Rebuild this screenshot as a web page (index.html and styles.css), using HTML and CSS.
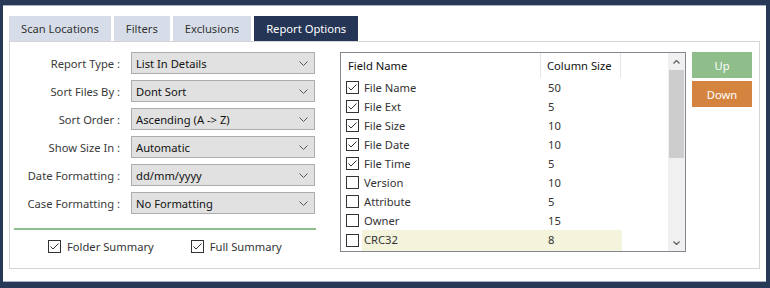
FILE: index.html
```html
<!DOCTYPE html>
<html lang="en">
<head>
    <meta charset="UTF-8">
    <title>Report Options</title>
    <link rel="stylesheet" href="styles.css">
</head>
<body>
    <div class="window">
        <div class="tabs">
            <div class="tab">Scan Locations</div>
            <div class="tab">Filters</div>
            <div class="tab">Exclusions</div>
            <div class="tab active">Report Options</div>
        </div>

        <div class="panel">
            <div class="options">
                <div class="form-grid">
                    <label>Report Type :</label>
                    <div class="select">List In Details<svg viewBox="0 0 9 5"><polyline points="0.5,0.5 4.5,4.5 8.5,0.5"/></svg></div>
                    <label>Sort Files By :</label>
                    <div class="select">Dont Sort<svg viewBox="0 0 9 5"><polyline points="0.5,0.5 4.5,4.5 8.5,0.5"/></svg></div>
                    <label>Sort Order :</label>
                    <div class="select">Ascending (A -&gt; Z)<svg viewBox="0 0 9 5"><polyline points="0.5,0.5 4.5,4.5 8.5,0.5"/></svg></div>
                    <label>Show Size In :</label>
                    <div class="select">Automatic<svg viewBox="0 0 9 5"><polyline points="0.5,0.5 4.5,4.5 8.5,0.5"/></svg></div>
                    <label>Date Formatting :</label>
                    <div class="select">dd/mm/yyyy<svg viewBox="0 0 9 5"><polyline points="0.5,0.5 4.5,4.5 8.5,0.5"/></svg></div>
                    <label>Case Formatting :</label>
                    <div class="select">No Formatting<svg viewBox="0 0 9 5"><polyline points="0.5,0.5 4.5,4.5 8.5,0.5"/></svg></div>
                </div>
                <div class="divider"></div>
                <div class="summary">
                    <div class="check-item"><span class="box checked"><svg viewBox="0 0 11 11"><polyline points="1.5,5.5 4,8 9.5,2.5"/></svg></span>Folder Summary</div>
                    <div class="check-item"><span class="box checked"><svg viewBox="0 0 11 11"><polyline points="1.5,5.5 4,8 9.5,2.5"/></svg></span>Full Summary</div>
                </div>
            </div>

            <div class="field-list">
                <div class="list-body">
                    <div class="list-head">
                        <div class="head-name">Field Name</div>
                        <div class="head-size">Column Size</div>
                    </div>
                    <div class="row"><span class="box checked"><svg viewBox="0 0 11 11"><polyline points="1.5,5.5 4,8 9.5,2.5"/></svg></span><span class="cell-name">File Name</span><span class="cell-size">50</span></div>
                    <div class="row"><span class="box checked"><svg viewBox="0 0 11 11"><polyline points="1.5,5.5 4,8 9.5,2.5"/></svg></span><span class="cell-name">File Ext</span><span class="cell-size">5</span></div>
                    <div class="row"><span class="box checked"><svg viewBox="0 0 11 11"><polyline points="1.5,5.5 4,8 9.5,2.5"/></svg></span><span class="cell-name">File Size</span><span class="cell-size">10</span></div>
                    <div class="row"><span class="box checked"><svg viewBox="0 0 11 11"><polyline points="1.5,5.5 4,8 9.5,2.5"/></svg></span><span class="cell-name">File Date</span><span class="cell-size">10</span></div>
                    <div class="row"><span class="box checked"><svg viewBox="0 0 11 11"><polyline points="1.5,5.5 4,8 9.5,2.5"/></svg></span><span class="cell-name">File Time</span><span class="cell-size">5</span></div>
                    <div class="row"><span class="box"></span><span class="cell-name">Version</span><span class="cell-size">10</span></div>
                    <div class="row"><span class="box"></span><span class="cell-name">Attribute</span><span class="cell-size">5</span></div>
                    <div class="row"><span class="box"></span><span class="cell-name">Owner</span><span class="cell-size">15</span></div>
                    <div class="row selected"><span class="box"></span><span class="cell-name">CRC32</span><span class="cell-size">8</span></div>
                </div>
                <div class="scrollbar">
                    <div class="arrow"><svg viewBox="0 0 7 4"><polyline points="0.5,3.5 3.5,0.5 6.5,3.5"/></svg></div>
                    <div class="track"><div class="thumb"></div></div>
                    <div class="arrow"><svg viewBox="0 0 7 4"><polyline points="0.5,0.5 3.5,3.5 6.5,0.5"/></svg></div>
                </div>
            </div>

            <div class="buttons">
                <div class="btn btn-up">Up</div>
                <div class="btn btn-down">Down</div>
            </div>
        </div>
    </div>
</body>
</html>
```

FILE: styles.css
```css
body {
    margin: 0;
    padding: 5px 4px 6px 3px;
    height: 288px;
    box-sizing: border-box;
    background: #283857;
    font-family: "Noto Sans", "Open Sans", sans-serif;
    font-size: 11.2px;
    color: #333;
}
.window {
    height: 100%;
    box-sizing: border-box;
    background: #fff;
    border-top: 1px solid #aab3c3;
    border-bottom: 1px solid #aab3c3;
    padding: 10px 6px 12px 6px;
    display: flex;
    flex-direction: column;
}
.tabs {
    display: flex;
    gap: 3px;
    height: 25px;
}
.tab {
    display: flex;
    align-items: center;
    padding: 0 12px;
    background: #d7dde8;
    color: #333;
}
.tab.active {
    background: #253556;
    color: #fff;
}
.panel {
    flex: 1;
    border: 1px solid #d4d4d4;
    display: flex;
    align-items: flex-start;
    padding: 10px 7px 0 4px;
}
.options {
    width: 302px;
}
.form-grid {
    display: grid;
    grid-template-columns: 106px 184px;
    column-gap: 11px;
    row-gap: 6px;
}
.form-grid label {
    display: flex;
    align-items: center;
    justify-content: flex-end;
    color: #3a3a3a;
}
.select {
    height: 22px;
    box-sizing: border-box;
    border: 1px solid #adadad;
    background: #e1e1e1;
    color: #111;
    display: flex;
    align-items: center;
    justify-content: space-between;
    padding: 0 6px 0 4px;
}
.select svg {
    width: 9px;
    height: 5px;
    fill: none;
    stroke: #555;
    stroke-width: 1;
}
.divider {
    margin-top: 14px;
    height: 2px;
    background: #8fbd8b;
}
.summary {
    margin-top: 6px;
    height: 20px;
    display: flex;
    align-items: center;
    gap: 37px;
    padding-left: 34px;
}
.check-item {
    display: flex;
    align-items: center;
    gap: 6px;
}
.box {
    width: 13px;
    height: 13px;
    box-sizing: border-box;
    border: 1px solid #333;
    background: #fff;
    display: flex;
    align-items: center;
    justify-content: center;
    flex-shrink: 0;
}
.box svg {
    width: 11px;
    height: 11px;
    fill: none;
    stroke: #333;
    stroke-width: 1;
}
.field-list {
    margin-left: 24px;
    width: 346px;
    height: 200px;
    box-sizing: border-box;
    border: 1px solid #828790;
    display: flex;
    overflow: hidden;
}
.list-body {
    flex: 1;
    display: flex;
    flex-direction: column;
}
.list-head {
    height: 25px;
    display: flex;
    color: #111;
}
.head-name, .head-size {
    display: flex;
    align-items: center;
    border-right: 1px solid #e5e5e5;
}
.head-name {
    width: 200px;
    padding-left: 7px;
    box-sizing: border-box;
}
.head-size {
    width: 80px;
    padding-left: 6px;
    box-sizing: border-box;
}
.row {
    height: 19px;
    display: flex;
    align-items: stretch;
    color: #333;
}
.row .box {
    align-self: center;
    margin: 0 3px 0 5px;
}
.cell-name, .cell-size {
    display: flex;
    align-items: center;
    box-sizing: border-box;
}
.cell-name {
    width: 180px;
    padding-left: 2px;
}
.cell-size {
    width: 80px;
    padding-left: 6px;
}
.row.selected {
    height: 21px;
}
.row.selected .cell-name,
.row.selected .cell-size {
    background: #f4f4dc;
    padding-bottom: 2px;
}
.scrollbar {
    width: 17px;
    background: #f0f0f0;
    display: flex;
    flex-direction: column;
}
.arrow {
    height: 17px;
    display: flex;
    align-items: center;
    justify-content: center;
}
.arrow svg {
    width: 7px;
    height: 4px;
    fill: none;
    stroke: #606060;
    stroke-width: 1.3;
}
.track {
    flex: 1;
    padding: 0 1px;
}
.thumb {
    height: 88px;
    background: #cdcdcd;
}
.buttons {
    margin-left: 6px;
    width: 60px;
    display: flex;
    flex-direction: column;
    gap: 3px;
}
.btn {
    height: 26px;
    display: flex;
    align-items: center;
    justify-content: center;
    color: #fff;
}
.btn-up { background: #8fbe8b; }
.btn-down { background: #d4843f; }
```
